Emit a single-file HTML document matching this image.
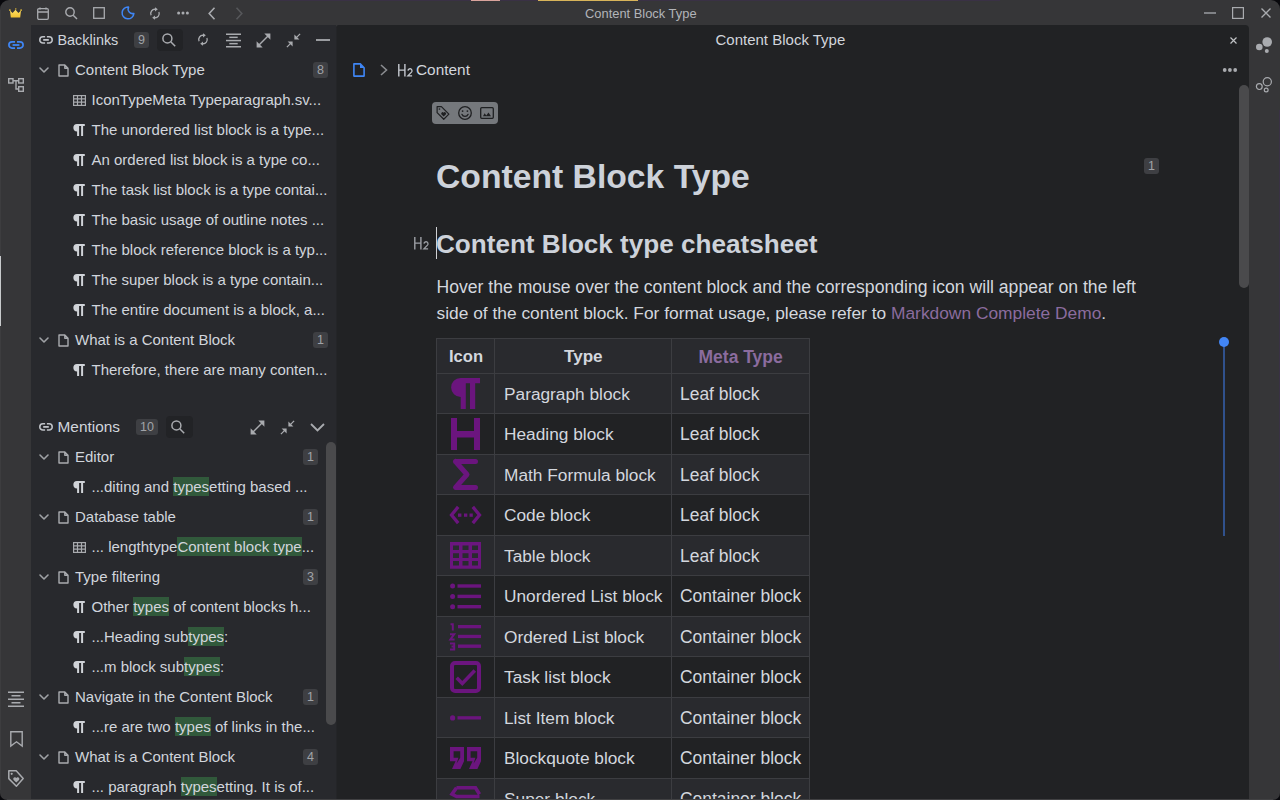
<!DOCTYPE html>
<html><head><meta charset="utf-8"><style>
*{box-sizing:border-box;margin:0;padding:0}
html,body{width:1280px;height:800px;overflow:hidden;background:#363638;font-family:"Liberation Sans",sans-serif}
.win{position:absolute;left:0;top:0;width:1280px;height:800px;background:#363638;border-radius:9px 9px 7px 7px;overflow:visible}
svg{position:absolute;display:block;overflow:visible}
.t{position:absolute;white-space:nowrap;color:#d1d5dc;font-size:15px;line-height:30px;height:30px}
.panel{position:absolute;left:31px;top:25px;width:305px;height:775px;background:#28292d;overflow:hidden}
.editor{position:absolute;left:336px;top:25px;width:913px;height:775px;background:#212224;border-top-left-radius:3px;border-top-right-radius:4px;border-left:1px solid #242528;overflow:hidden}
.badge{position:absolute;width:15px;height:16px;border-radius:3px;background:#3e3f43;color:#a0a3a8;font-size:12.5px;line-height:16px;text-align:center}
.hl{background:#31593b;padding:1px 0}
.g{fill:none;stroke:#a9abaf;stroke-width:1.5;stroke-linecap:round;stroke-linejoin:round}
.gf{fill:#a9abaf;stroke:none}
.p{fill:#6b157e;stroke:none}
.ps{fill:none;stroke:#6b157e}
</style></head><body>
<div style="position:absolute;left:0;top:0;width:12px;height:12px;background:#08080c"></div><div style="position:absolute;right:0;top:0;width:12px;height:12px;background:#08080c"></div><div style="position:absolute;left:0;bottom:0;width:12px;height:12px;background:#08080c"></div><div style="position:absolute;right:0;bottom:0;width:12px;height:12px;background:#08080c"></div>
<div class="win"></div>
<div style="position:absolute;left:260px;top:0;width:740px;height:1px;background:#3a3145"></div>
<div style="position:absolute;left:1279px;top:110px;width:1px;height:560px;background:#3a3145"></div>
<div style="position:absolute;left:471px;top:0;width:29px;height:1px;background:#d9a39c"></div>
<div style="position:absolute;left:538px;top:0;width:100px;height:1px;background:#d8b45a"></div>
<div style="position:absolute;left:0;top:10px;width:1px;height:780px;background:#3d3d3f"></div>
<div style="position:absolute;left:0;top:256px;width:1px;height:70px;background:#c8cacc"></div>
<svg style="left:8.5px;top:8.3px;width:13px;height:10px" viewBox="0 0 13 10" class=""><defs><linearGradient id="cg" x1="0" y1="0" x2="0" y2="1"><stop offset="0" stop-color="#ffe066"/><stop offset="1" stop-color="#f2c230"/></linearGradient></defs><path d="M1 2.6L3.6 5L6.5 1.7L9.4 5L12 2.6L11.2 9.6H1.8Z" fill="url(#cg)"/><circle cx="0.9" cy="2.1" r="0.85" fill="#eec53a"/><circle cx="12.1" cy="2.1" r="0.85" fill="#eec53a"/><path d="M6.2 0.2H7.4L7.2 1.8H6.4Z" fill="#eec53a"/></svg>
<svg style="left:37px;top:7px;width:12px;height:13px" viewBox="0 0 12 13" class=""><g fill="none" stroke="#a9abaf" stroke-width="1.3"><rect x="0.7" y="1.7" width="10.6" height="10.6" rx="1.2"/><path d="M0.7 5H11.3M3 0.5V2.5M9 0.5V2.5"/></g></svg>
<svg style="left:65px;top:7px;width:13px;height:13px" viewBox="0 0 13 13" class=""><g fill="none" stroke="#a9abaf" stroke-width="1.4"><circle cx="5" cy="5" r="4.2"/><path d="M8.2 8.2L12 12"/></g></svg>
<svg style="left:93px;top:7px;width:12px;height:12px" viewBox="0 0 12 12" class=""><rect x="0.7" y="0.7" width="10.6" height="10.6" fill="none" stroke="#a9abaf" stroke-width="1.3"/></svg>
<svg style="left:120.5px;top:6.3px;width:14px;height:14px" viewBox="0 0 14 14" class=""><path d="M7.6 1.1A5.9 5.9 0 1 0 12.9 7.4A4.5 4.5 0 0 1 7.6 1.1Z" fill="none" stroke="#3f86f5" stroke-width="1.5" stroke-linejoin="round"/></svg>
<svg style="left:150px;top:6.5px;width:10px;height:13px" viewBox="0 0 10 13" class=""><g fill="none" stroke="#a9abaf" stroke-width="1.3"><path d="M5.4 2.3A4.2 4.2 0 0 0 1.1 8.2"/><path d="M8.9 4.9A4.2 4.2 0 0 1 4.6 10.7"/></g><path d="M5 0.2L7.8 2.3L5 4.4Z" fill="#a9abaf"/><path d="M5 8.6L2.2 10.7L5 12.8Z" fill="#a9abaf"/></svg>
<svg style="left:177px;top:11px;width:12px;height:4px" viewBox="0 0 12 4" class=""><g fill="#a9abaf"><circle cx="1.6" cy="2" r="1.5"/><circle cx="6" cy="2" r="1.5"/><circle cx="10.4" cy="2" r="1.5"/></g></svg>
<svg style="left:208px;top:7px;width:8px;height:13px" viewBox="0 0 8 13" class=""><path d="M6.5 0.8L1.2 6.5L6.5 12.2" fill="none" stroke="#a9abaf" stroke-width="1.6"/></svg>
<svg style="left:235px;top:7px;width:8px;height:13px" viewBox="0 0 8 13" class=""><path d="M1.5 0.8L6.8 6.5L1.5 12.2" fill="none" stroke="#56575a" stroke-width="1.6"/></svg>
<div class="t" style="left:585px;top:5px;height:18px;line-height:18px;font-size:12.9px;color:#b2b4b8">Content Block Type</div>
<div style="position:absolute;left:1204px;top:12px;width:12px;height:2px;background:#808286"></div>
<svg style="left:1232px;top:7px;width:12px;height:12px" viewBox="0 0 12 12" class=""><rect x="0.6" y="0.6" width="10.8" height="10.8" fill="none" stroke="#a9abaf" stroke-width="1.2"/></svg>
<svg style="left:1261px;top:8px;width:10px;height:10px" viewBox="0 0 10 10" class=""><path d="M0.5 0.5L9.5 9.5M9.5 0.5L0.5 9.5" fill="none" stroke="#a9abaf" stroke-width="1.4"/></svg>
<svg style="left:8px;top:41px;width:16px;height:8px" viewBox="0 0 16 8" class=""><g fill="none" stroke="#3f86f5" stroke-width="1.7"><path d="M7 0.9H4A3.1 3.1 0 0 0 4 7.1H7"/><path d="M9 0.9H12A3.1 3.1 0 0 1 12 7.1H9"/><path d="M4.6 4H11.4" stroke-width="1.8"/></g></svg>
<svg style="left:8px;top:78px;width:16px;height:14px" viewBox="0 0 16 14" class=""><g fill="none" stroke="#a9abaf" stroke-width="1.4"><rect x="0.7" y="0.7" width="4.3" height="4.3"/><rect x="10.7" y="0.7" width="4.6" height="4.3"/><rect x="10.7" y="8.7" width="4.6" height="4.6"/><path d="M5 2.8H10.7M8 2.8V11H10.7"/></g></svg>
<svg style="left:8px;top:691px;width:16px;height:16px" viewBox="0 0 16 16" class=""><g fill="#a9abaf"><rect x="0" y="0.5" width="16" height="1.5"/><rect x="3.5" y="4.0" width="9.0" height="1.5"/><rect x="0" y="7.5" width="16" height="1.5"/><rect x="3.5" y="11.0" width="9.0" height="1.5"/><rect x="0" y="14.5" width="16" height="1.5"/></g></svg>
<svg style="left:10px;top:731px;width:13px;height:16px" viewBox="0 0 13 16" class=""><path d="M0.8 0.8H12.2V15L6.5 10.8L0.8 15Z" fill="none" stroke="#a9abaf" stroke-width="1.4" stroke-linejoin="miter"/></svg>
<svg style="left:8px;top:770px;width:16px;height:17px" viewBox="0 0 16 17" class=""><path d="M0.8 0.8H8.2L15.2 8.6L8.4 16.2L0.8 8.6Z" fill="none" stroke="#a9abaf" stroke-width="1.5" stroke-linejoin="round"/><circle cx="3.7" cy="3.8" r="1.1" fill="#a9abaf"/><path d="M8.3 12.6L5.6 10A1.6 1.6 0 0 1 8.3 7.9A1.6 1.6 0 0 1 11 10Z" fill="#a9abaf"/></svg>
<svg style="left:1255px;top:36px;width:18px;height:18px" viewBox="0 0 18 18" class=""><g fill="#a9abaf"><circle cx="12.2" cy="6" r="4.8"/><circle cx="4.3" cy="11" r="3.3"/><circle cx="11.8" cy="15" r="2"/></g></svg>
<svg style="left:1255px;top:76px;width:18px;height:18px" viewBox="0 0 18 18" class=""><g fill="none" stroke="#a9abaf" stroke-width="1.2"><circle cx="12.3" cy="5.7" r="4.1"/><circle cx="4.3" cy="10.6" r="2.9"/><circle cx="11.2" cy="14" r="1.9"/></g></svg>
<div class="panel"></div>
<svg style="left:39px;top:36.2px;width:14px;height:8px" viewBox="0 0 14 8" class=""><g fill="none" stroke="#bfc2c7" stroke-width="1.6"><path d="M6.1 0.8H3.9A3.1 3.1 0 0 0 3.9 7H6.1"/><path d="M7.9 0.8H10.1A3.1 3.1 0 0 1 10.1 7H7.9"/><path d="M4.2 3.9H9.8" stroke-width="1.8"/></g></svg>
<div class="t" style="left:57.5px;top:24.5px;font-size:14.4px;">Backlinks</div>
<div class="badge" style="left:134px;top:32px;width:15px">9</div>
<div style="position:absolute;left:157px;top:29px;width:26px;height:22px;border-radius:4px;background:#222326"></div>
<svg style="left:162px;top:33px;width:14px;height:14px" viewBox="0 0 14 14" class=""><g fill="none" stroke="#a9abaf" stroke-width="1.5"><circle cx="5.4" cy="5.4" r="4.5"/><path d="M8.7 8.7L13.2 13.2"/></g></svg>
<svg style="left:197.5px;top:33px;width:10px;height:13px" viewBox="0 0 10 13" class=""><g fill="none" stroke="#a9abaf" stroke-width="1.3"><path d="M5.4 2.3A4.2 4.2 0 0 0 1.1 8.2"/><path d="M8.9 4.9A4.2 4.2 0 0 1 4.6 10.7"/></g><path d="M5 0.2L7.8 2.3L5 4.4Z" fill="#a9abaf"/><path d="M5 8.6L2.2 10.7L5 12.8Z" fill="#a9abaf"/></svg>
<svg style="left:225.5px;top:33px;width:15px;height:14.5px" viewBox="0 0 15 14.5" class=""><g fill="#a9abaf"><rect x="0" y="0.5" width="15" height="1.5"/><rect x="3.3" y="3.6" width="8.4" height="1.5"/><rect x="0" y="6.8" width="15" height="1.5"/><rect x="3.3" y="9.9" width="8.4" height="1.5"/><rect x="0" y="13.0" width="15" height="1.5"/></g></svg>
<svg style="left:255.5px;top:32.5px;width:15px;height:15px" viewBox="0 0 15 15" class=""><path d="M2.5 12.5L12.5 2.5" stroke="#a9abaf" stroke-width="1.5"/><g fill="#a9abaf"><path d="M8.3 0.6H14.4V6.7Z"/><path d="M0.6 8.3V14.4H6.7Z"/></g></svg>
<svg style="left:285.5px;top:32.5px;width:15px;height:15px" viewBox="0 0 15 15" class=""><path d="M0.9 14.1L5.4 9.6M9.6 5.4L14.1 0.9" stroke="#a9abaf" stroke-width="1.3"/><g fill="#a9abaf"><path d="M8.4 1.6V6.6H13.4Z"/><path d="M1.6 8.4H6.6V13.4Z"/></g></svg>
<div style="position:absolute;left:316px;top:39.3px;width:14px;height:1.4px;background:#9a9ca0"></div>
<svg style="left:39px;top:67px;width:10px;height:6px" viewBox="0 0 10 6" class=""><path d="M1 1L5 5L9 1" fill="none" stroke="#9fa1a5" stroke-width="1.6" stroke-linecap="round" stroke-linejoin="round"/></svg>
<svg style="left:57.5px;top:64px;width:11px;height:13px" viewBox="0 0 11 13" class=""><path d="M1 1H6.8L10 4.2V12H1Z M6.8 1V4.2H10" fill="none" stroke="#a9abaf" stroke-width="1.4" stroke-linejoin="round"/></svg>
<div class="t" style="left:75px;top:54.5px;font-size:15px;">Content Block Type</div>
<div class="badge" style="left:313px;top:62px;width:15px">8</div>
<svg style="left:72.5px;top:94.5px;width:13px;height:11px" viewBox="0 0 13 11" class=""><g fill="none" stroke="#a9abaf" stroke-width="1.2"><rect x="0.6" y="0.6" width="11.8" height="9.8"/><path d="M0.6 3.9H12.4M0.6 7.2H12.4M4.5 0.6V10.4M8.5 0.6V10.4"/></g></svg>
<div class="t" style="left:91.5px;top:84.5px;font-size:15px;">IconTypeMeta Typeparagraph.sv...</div>
<svg style="left:73px;top:124px;width:12px;height:12px" viewBox="0 0 12 12" class=""><path d="M4 0H11.8V2.1H10.1V12H8.1V2.1H6.1V12H4.1V7.4A3.7 3.7 0 0 1 4 0Z" fill="#d0d3d8"/></svg>
<div class="t" style="left:91.5px;top:114.5px;font-size:15px;">The unordered list block is a type...</div>
<svg style="left:73px;top:154px;width:12px;height:12px" viewBox="0 0 12 12" class=""><path d="M4 0H11.8V2.1H10.1V12H8.1V2.1H6.1V12H4.1V7.4A3.7 3.7 0 0 1 4 0Z" fill="#d0d3d8"/></svg>
<div class="t" style="left:91.5px;top:144.5px;font-size:15px;">An ordered list block is a type co...</div>
<svg style="left:73px;top:184px;width:12px;height:12px" viewBox="0 0 12 12" class=""><path d="M4 0H11.8V2.1H10.1V12H8.1V2.1H6.1V12H4.1V7.4A3.7 3.7 0 0 1 4 0Z" fill="#d0d3d8"/></svg>
<div class="t" style="left:91.5px;top:174.5px;font-size:15px;">The task list block is a type contai...</div>
<svg style="left:73px;top:214px;width:12px;height:12px" viewBox="0 0 12 12" class=""><path d="M4 0H11.8V2.1H10.1V12H8.1V2.1H6.1V12H4.1V7.4A3.7 3.7 0 0 1 4 0Z" fill="#d0d3d8"/></svg>
<div class="t" style="left:91.5px;top:204.5px;font-size:15px;">The basic usage of outline notes ...</div>
<svg style="left:73px;top:244px;width:12px;height:12px" viewBox="0 0 12 12" class=""><path d="M4 0H11.8V2.1H10.1V12H8.1V2.1H6.1V12H4.1V7.4A3.7 3.7 0 0 1 4 0Z" fill="#d0d3d8"/></svg>
<div class="t" style="left:91.5px;top:234.5px;font-size:15px;">The block reference block is a typ...</div>
<svg style="left:73px;top:274px;width:12px;height:12px" viewBox="0 0 12 12" class=""><path d="M4 0H11.8V2.1H10.1V12H8.1V2.1H6.1V12H4.1V7.4A3.7 3.7 0 0 1 4 0Z" fill="#d0d3d8"/></svg>
<div class="t" style="left:91.5px;top:264.5px;font-size:15px;">The super block is a type contain...</div>
<svg style="left:73px;top:304px;width:12px;height:12px" viewBox="0 0 12 12" class=""><path d="M4 0H11.8V2.1H10.1V12H8.1V2.1H6.1V12H4.1V7.4A3.7 3.7 0 0 1 4 0Z" fill="#d0d3d8"/></svg>
<div class="t" style="left:91.5px;top:294.5px;font-size:15px;">The entire document is a block, a...</div>
<svg style="left:39px;top:337px;width:10px;height:6px" viewBox="0 0 10 6" class=""><path d="M1 1L5 5L9 1" fill="none" stroke="#9fa1a5" stroke-width="1.6" stroke-linecap="round" stroke-linejoin="round"/></svg>
<svg style="left:57.5px;top:334px;width:11px;height:13px" viewBox="0 0 11 13" class=""><path d="M1 1H6.8L10 4.2V12H1Z M6.8 1V4.2H10" fill="none" stroke="#a9abaf" stroke-width="1.4" stroke-linejoin="round"/></svg>
<div class="t" style="left:75px;top:324.5px;font-size:15px;">What is a Content Block</div>
<div class="badge" style="left:313px;top:332px;width:15px">1</div>
<svg style="left:73px;top:364px;width:12px;height:12px" viewBox="0 0 12 12" class=""><path d="M4 0H11.8V2.1H10.1V12H8.1V2.1H6.1V12H4.1V7.4A3.7 3.7 0 0 1 4 0Z" fill="#d0d3d8"/></svg>
<div class="t" style="left:91.5px;top:354.5px;font-size:15px;">Therefore, there are many conten...</div>
<svg style="left:39px;top:423.3px;width:14px;height:8px" viewBox="0 0 14 8" class=""><g fill="none" stroke="#bfc2c7" stroke-width="1.6"><path d="M6.1 0.8H3.9A3.1 3.1 0 0 0 3.9 7H6.1"/><path d="M7.9 0.8H10.1A3.1 3.1 0 0 1 10.1 7H7.9"/><path d="M4.2 3.9H9.8" stroke-width="1.8"/></g></svg>
<div class="t" style="left:57.5px;top:411.5px;font-size:15.4px;">Mentions</div>
<div class="badge" style="left:136px;top:419px;width:22px">10</div>
<div style="position:absolute;left:166px;top:416px;width:27px;height:22px;border-radius:4px;background:#222326"></div>
<svg style="left:171px;top:420px;width:14px;height:14px" viewBox="0 0 14 14" class=""><g fill="none" stroke="#a9abaf" stroke-width="1.5"><circle cx="5.4" cy="5.4" r="4.5"/><path d="M8.7 8.7L13.2 13.2"/></g></svg>
<svg style="left:249.5px;top:420px;width:15px;height:15px" viewBox="0 0 15 15" class=""><path d="M2.5 12.5L12.5 2.5" stroke="#a9abaf" stroke-width="1.5"/><g fill="#a9abaf"><path d="M8.3 0.6H14.4V6.7Z"/><path d="M0.6 8.3V14.4H6.7Z"/></g></svg>
<svg style="left:279.5px;top:420px;width:15px;height:15px" viewBox="0 0 15 15" class=""><path d="M0.9 14.1L5.4 9.6M9.6 5.4L14.1 0.9" stroke="#a9abaf" stroke-width="1.3"/><g fill="#a9abaf"><path d="M8.4 1.6V6.6H13.4Z"/><path d="M1.6 8.4H6.6V13.4Z"/></g></svg>
<svg style="left:310px;top:423px;width:15px;height:9px" viewBox="0 0 15 9" class=""><path d="M1 1L7.5 7.5L14 1" fill="none" stroke="#a9abaf" stroke-width="1.8"/></svg>
<div style="position:absolute;left:326px;top:442px;width:10px;height:283px;border-radius:5px;background:#4a4a4c"></div>
<svg style="left:39px;top:454px;width:10px;height:6px" viewBox="0 0 10 6" class=""><path d="M1 1L5 5L9 1" fill="none" stroke="#9fa1a5" stroke-width="1.6" stroke-linecap="round" stroke-linejoin="round"/></svg>
<svg style="left:57.5px;top:451px;width:11px;height:13px" viewBox="0 0 11 13" class=""><path d="M1 1H6.8L10 4.2V12H1Z M6.8 1V4.2H10" fill="none" stroke="#a9abaf" stroke-width="1.4" stroke-linejoin="round"/></svg>
<div class="t" style="left:75px;top:441.5px;font-size:15px;">Editor</div>
<div class="badge" style="left:303px;top:449px;width:15px">1</div>
<svg style="left:73px;top:481px;width:12px;height:12px" viewBox="0 0 12 12" class=""><path d="M4 0H11.8V2.1H10.1V12H8.1V2.1H6.1V12H4.1V7.4A3.7 3.7 0 0 1 4 0Z" fill="#d0d3d8"/></svg>
<div class="t" style="left:91.5px;top:471.5px;font-size:15px;">...diting and <span class="hl">types</span>etting based ...</div>
<svg style="left:39px;top:514px;width:10px;height:6px" viewBox="0 0 10 6" class=""><path d="M1 1L5 5L9 1" fill="none" stroke="#9fa1a5" stroke-width="1.6" stroke-linecap="round" stroke-linejoin="round"/></svg>
<svg style="left:57.5px;top:511px;width:11px;height:13px" viewBox="0 0 11 13" class=""><path d="M1 1H6.8L10 4.2V12H1Z M6.8 1V4.2H10" fill="none" stroke="#a9abaf" stroke-width="1.4" stroke-linejoin="round"/></svg>
<div class="t" style="left:75px;top:501.5px;font-size:15px;">Database table</div>
<div class="badge" style="left:303px;top:509px;width:15px">1</div>
<svg style="left:72.5px;top:541.5px;width:13px;height:11px" viewBox="0 0 13 11" class=""><g fill="none" stroke="#a9abaf" stroke-width="1.2"><rect x="0.6" y="0.6" width="11.8" height="9.8"/><path d="M0.6 3.9H12.4M0.6 7.2H12.4M4.5 0.6V10.4M8.5 0.6V10.4"/></g></svg>
<div class="t" style="left:91.5px;top:531.5px;font-size:15px;">... lengthtype<span class="hl">Content block type</span>...</div>
<svg style="left:39px;top:574px;width:10px;height:6px" viewBox="0 0 10 6" class=""><path d="M1 1L5 5L9 1" fill="none" stroke="#9fa1a5" stroke-width="1.6" stroke-linecap="round" stroke-linejoin="round"/></svg>
<svg style="left:57.5px;top:571px;width:11px;height:13px" viewBox="0 0 11 13" class=""><path d="M1 1H6.8L10 4.2V12H1Z M6.8 1V4.2H10" fill="none" stroke="#a9abaf" stroke-width="1.4" stroke-linejoin="round"/></svg>
<div class="t" style="left:75px;top:561.5px;font-size:15px;">Type filtering</div>
<div class="badge" style="left:303px;top:569px;width:15px">3</div>
<svg style="left:73px;top:601px;width:12px;height:12px" viewBox="0 0 12 12" class=""><path d="M4 0H11.8V2.1H10.1V12H8.1V2.1H6.1V12H4.1V7.4A3.7 3.7 0 0 1 4 0Z" fill="#d0d3d8"/></svg>
<div class="t" style="left:91.5px;top:591.5px;font-size:15px;">Other <span class="hl">types</span> of content blocks h...</div>
<svg style="left:73px;top:631px;width:12px;height:12px" viewBox="0 0 12 12" class=""><path d="M4 0H11.8V2.1H10.1V12H8.1V2.1H6.1V12H4.1V7.4A3.7 3.7 0 0 1 4 0Z" fill="#d0d3d8"/></svg>
<div class="t" style="left:91.5px;top:621.5px;font-size:15px;">...Heading sub<span class="hl">types</span>:</div>
<svg style="left:73px;top:661px;width:12px;height:12px" viewBox="0 0 12 12" class=""><path d="M4 0H11.8V2.1H10.1V12H8.1V2.1H6.1V12H4.1V7.4A3.7 3.7 0 0 1 4 0Z" fill="#d0d3d8"/></svg>
<div class="t" style="left:91.5px;top:651.5px;font-size:15px;">...m block sub<span class="hl">types</span>:</div>
<svg style="left:39px;top:694px;width:10px;height:6px" viewBox="0 0 10 6" class=""><path d="M1 1L5 5L9 1" fill="none" stroke="#9fa1a5" stroke-width="1.6" stroke-linecap="round" stroke-linejoin="round"/></svg>
<svg style="left:57.5px;top:691px;width:11px;height:13px" viewBox="0 0 11 13" class=""><path d="M1 1H6.8L10 4.2V12H1Z M6.8 1V4.2H10" fill="none" stroke="#a9abaf" stroke-width="1.4" stroke-linejoin="round"/></svg>
<div class="t" style="left:75px;top:681.5px;font-size:15px;">Navigate in the Content Block</div>
<div class="badge" style="left:303px;top:689px;width:15px">1</div>
<svg style="left:73px;top:721px;width:12px;height:12px" viewBox="0 0 12 12" class=""><path d="M4 0H11.8V2.1H10.1V12H8.1V2.1H6.1V12H4.1V7.4A3.7 3.7 0 0 1 4 0Z" fill="#d0d3d8"/></svg>
<div class="t" style="left:91.5px;top:711.5px;font-size:15px;">...re are two <span class="hl">types</span> of links in the...</div>
<svg style="left:39px;top:754px;width:10px;height:6px" viewBox="0 0 10 6" class=""><path d="M1 1L5 5L9 1" fill="none" stroke="#9fa1a5" stroke-width="1.6" stroke-linecap="round" stroke-linejoin="round"/></svg>
<svg style="left:57.5px;top:751px;width:11px;height:13px" viewBox="0 0 11 13" class=""><path d="M1 1H6.8L10 4.2V12H1Z M6.8 1V4.2H10" fill="none" stroke="#a9abaf" stroke-width="1.4" stroke-linejoin="round"/></svg>
<div class="t" style="left:75px;top:741.5px;font-size:15px;">What is a Content Block</div>
<div class="badge" style="left:303px;top:749px;width:15px">4</div>
<svg style="left:73px;top:781px;width:12px;height:12px" viewBox="0 0 12 12" class=""><path d="M4 0H11.8V2.1H10.1V12H8.1V2.1H6.1V12H4.1V7.4A3.7 3.7 0 0 1 4 0Z" fill="#d0d3d8"/></svg>
<div class="t" style="left:91.5px;top:771.5px;font-size:15px;">... paragraph <span class="hl">types</span>etting. It is of...</div>
<div class="editor"></div>
<div class="t" style="left:715.5px;top:24.5px;font-size:15px;">Content Block Type</div>
<svg style="left:1229.5px;top:36.5px;width:7px;height:7px" viewBox="0 0 7 7" class=""><path d="M0.5 0.5L6.5 6.5M6.5 0.5L0.5 6.5" fill="none" stroke="#c0c2c5" stroke-width="1.2"/></svg>
<svg style="left:353px;top:63px;width:12px;height:14px" viewBox="0 0 12 14" class=""><path d="M0.9 0.9H7.3L11.1 4.7V13.1H0.9Z" fill="none" stroke="#3f86f5" stroke-width="1.6" stroke-linejoin="round"/><path d="M7 0.9V4.9H11.1Z" fill="#3f86f5"/></svg>
<svg style="left:380px;top:64px;width:8px;height:12px" viewBox="0 0 8 12" class=""><path d="M1 1L6.5 6L1 11" fill="none" stroke="#8a8c90" stroke-width="1.6"/></svg>
<svg style="left:397.5px;top:63.7px;width:15px;height:13px" viewBox="0 0 15 13" class=""><g fill="none" stroke="#c5c9d0" stroke-width="1.4"><path d="M0.8 0V12.4M6.9 0V12.4M0.8 6.1H6.9"/><path d="M10 6.6A2 2 0 1 1 13.5 8.1L9.9 11.8H14.1" stroke-width="1.3"/></g></svg>
<div class="t" style="left:416px;top:54.5px;font-size:15.4px;">Content</div>
<svg style="left:1222px;top:68px;width:15px;height:4px" viewBox="0 0 15 4" class=""><g fill="#a9abaf"><circle cx="2.7" cy="2" r="1.9"/><circle cx="7.9" cy="2" r="1.9"/><circle cx="13.2" cy="2" r="1.9"/></g></svg>
<div style="position:absolute;left:1239px;top:85px;width:10px;height:203px;border-radius:5px;background:#4a4a4c"></div>
<div style="position:absolute;left:432px;top:102px;width:66px;height:22px;border-radius:4px;background:#75787c"></div>
<svg style="left:436px;top:106px;width:14px;height:14px" viewBox="0 0 14 15" class=""><g fill="none" stroke="#1f2022" stroke-width="1.3" stroke-linejoin="round"><path d="M0.7 0.7H5.3L13.3 8.7L7.8 14.2L0.7 7.1Z"/></g><circle cx="3.2" cy="3.2" r="0.9" fill="#1f2022"/><path d="M7.7 11.3L5.4 9A1.4 1.4 0 0 1 7.7 7.2A1.4 1.4 0 0 1 10 9Z" fill="#1f2022"/></svg>
<svg style="left:458px;top:106px;width:14px;height:14px" viewBox="0 0 14 14" class=""><g fill="none" stroke="#1f2022" stroke-width="1.3"><circle cx="7" cy="7" r="6.3"/><path d="M3.9 8.3A3.3 3.3 0 0 0 10.1 8.3" stroke-linecap="round"/></g><circle cx="4.6" cy="5.1" r="0.9" fill="#1f2022"/><circle cx="9.4" cy="5.1" r="0.9" fill="#1f2022"/></svg>
<svg style="left:480px;top:107px;width:14px;height:12px" viewBox="0 0 14 12" class=""><rect x="0.7" y="0.7" width="12.6" height="10.6" rx="1" fill="none" stroke="#1f2022" stroke-width="1.3"/><path d="M3 9.2L4.6 6.3L6.3 8.4L8.5 5.6L11 9.2Z" fill="#1f2022"/></svg>
<div class="t" style="left:436px;top:152px;height:48px;line-height:48px;font-size:33.7px;font-weight:bold;color:#cdd2da">Content Block Type</div>
<div class="badge" style="left:1144px;top:158px;width:15px">1</div>
<svg style="left:413.5px;top:236.6px;width:15px;height:13px" viewBox="0 0 15 13" class=""><g fill="none" stroke="#9da0a6" stroke-width="1.4"><path d="M0.8 0V12.4M6.9 0V12.4M0.8 6.1H6.9"/><path d="M10 6.6A2 2 0 1 1 13.5 8.1L9.9 11.8H14.1" stroke-width="1.3"/></g></svg>
<div style="position:absolute;left:436px;top:227px;width:1px;height:32px;background:#cfd1d4"></div>
<div class="t" style="left:436px;top:226px;height:36px;line-height:36px;font-size:26.1px;font-weight:bold;color:#cdd2da">Content Block type cheatsheet</div>
<div class="t" style="left:436.5px;top:274px;height:26px;line-height:26px;font-size:17.6px;color:#d3d7de">Hover the mouse over the content block and the corresponding icon will appear on the left</div>
<div class="t" style="left:436.5px;top:300px;height:26px;line-height:26px;font-size:17.38px;color:#d3d7de">side of the content block. For format usage, please refer to <span style="color:#8b6c9e">Markdown Complete Demo</span>.</div>
<div style="position:absolute;left:1223px;top:342px;width:2px;height:194px;background:#30518c"></div>
<div style="position:absolute;left:1218.5px;top:336.5px;width:10.5px;height:10.5px;border-radius:50%;background:#4285f4"></div>
<div style="position:absolute;left:436px;top:338px;width:374px;height:35px;background:#292a2e"></div>
<div style="position:absolute;left:436px;top:373px;width:374px;height:40px;background:#292a2e"></div>
<div style="position:absolute;left:436px;top:454px;width:374px;height:40px;background:#292a2e"></div>
<div style="position:absolute;left:436px;top:535px;width:374px;height:40px;background:#292a2e"></div>
<div style="position:absolute;left:436px;top:616px;width:374px;height:40px;background:#292a2e"></div>
<div style="position:absolute;left:436px;top:697px;width:374px;height:40px;background:#292a2e"></div>
<div style="position:absolute;left:436px;top:778px;width:374px;height:41px;background:#292a2e"></div>
<div style="position:absolute;left:436px;top:338px;width:374px;height:1px;background:#3c3d41"></div>
<div style="position:absolute;left:436px;top:373px;width:374px;height:1px;background:#3c3d41"></div>
<div style="position:absolute;left:436px;top:413px;width:374px;height:1px;background:#3c3d41"></div>
<div style="position:absolute;left:436px;top:454px;width:374px;height:1px;background:#3c3d41"></div>
<div style="position:absolute;left:436px;top:494px;width:374px;height:1px;background:#3c3d41"></div>
<div style="position:absolute;left:436px;top:535px;width:374px;height:1px;background:#3c3d41"></div>
<div style="position:absolute;left:436px;top:575px;width:374px;height:1px;background:#3c3d41"></div>
<div style="position:absolute;left:436px;top:616px;width:374px;height:1px;background:#3c3d41"></div>
<div style="position:absolute;left:436px;top:656px;width:374px;height:1px;background:#3c3d41"></div>
<div style="position:absolute;left:436px;top:697px;width:374px;height:1px;background:#3c3d41"></div>
<div style="position:absolute;left:436px;top:737px;width:374px;height:1px;background:#3c3d41"></div>
<div style="position:absolute;left:436px;top:778px;width:374px;height:1px;background:#3c3d41"></div>
<div style="position:absolute;left:436px;top:338px;width:1px;height:470px;background:#3c3d41"></div>
<div style="position:absolute;left:494px;top:338px;width:1px;height:470px;background:#3c3d41"></div>
<div style="position:absolute;left:671px;top:338px;width:1px;height:470px;background:#3c3d41"></div>
<div style="position:absolute;left:809px;top:338px;width:1px;height:470px;background:#3c3d41"></div>
<div class="t" style="left:449px;top:341.6px;height:30px;line-height:30px;font-size:16.6px;font-weight:bold;color:#d3d7de">Icon</div>
<div class="t" style="left:564px;top:341.6px;height:30px;line-height:30px;font-size:17.1px;font-weight:bold;color:#d3d7de">Type</div>
<div class="t" style="left:698.5px;top:341.6px;height:30px;line-height:30px;font-size:17.5px;font-weight:bold;color:#8b6c9e">Meta Type</div>
<svg style="left:451px;top:378px;width:29px;height:31px" viewBox="0 0 29 31" class=""><path d="M9.5 0H29V5.2H24.2V31H19V5.2H14.8V31H9.7V19A9.5 9.5 0 0 1 9.5 0Z" fill="#6b157e"/></svg>
<svg style="left:451px;top:418px;width:29px;height:32px" viewBox="0 0 29 32" class=""><path d="M0 0H6V13H23V0H29V32H23V19.5H6V32H0Z" fill="#6b157e"/></svg>
<svg style="left:453px;top:459px;width:25px;height:31px" viewBox="0 0 25 31" class=""><path d="M2.5 2.5H22.5M2.5 2.5L14 15.5L2.5 28.5H22.5" fill="none" stroke="#6b157e" stroke-width="5" stroke-linecap="round" stroke-linejoin="round"/></svg>
<svg style="left:450px;top:506px;width:31px;height:18px" viewBox="0 0 31 18" class=""><path d="M8.2 0.9L1.5 9L8.2 17.1M22.8 0.9L29.5 9L22.8 17.1" fill="none" stroke="#6b157e" stroke-width="3.3"/><rect x="8" y="7.5" width="3.4" height="3.3" fill="#6b157e"/><rect x="14" y="7.5" width="3.3" height="3.3" fill="#6b157e"/><rect x="19.5" y="7.5" width="3.3" height="3.3" fill="#6b157e"/></svg>
<svg style="left:450px;top:542px;width:31px;height:27px" viewBox="0 0 31 27" class=""><path fill-rule="evenodd" d="M0 0H31V26.8H0Z M3 3.5V8H9V3.5Z M12.5 3.5V8H18.5V3.5Z M22 3.5V8H28V3.5Z M3 11.3V16H9V11.3Z M12.5 11.3V16H18.5V11.3Z M22 11.3V16H28V11.3Z M3 19V23.5H9V19Z M12.5 19V23.5H18.5V19Z M22 19V23.5H28V19Z" fill="#6b157e"/></svg>
<svg style="left:450px;top:582.5px;width:32px;height:26px" viewBox="0 0 32 26" class=""><g fill="#6b157e"><circle cx="2.6" cy="3" r="2.5"/><circle cx="2.6" cy="13.4" r="2.5"/><circle cx="2.6" cy="23.7" r="2.5"/><rect x="7.5" y="1.3" width="23.5" height="3.4"/><rect x="7.5" y="11.7" width="23.5" height="3.4"/><rect x="7.5" y="22" width="23.5" height="3.4"/></g></svg>
<svg style="left:450px;top:622.5px;width:32px;height:28px" viewBox="0 0 32 28" class=""><g fill="#6b157e"><rect x="8" y="2" width="23" height="3.3"/><rect x="8" y="11.8" width="23" height="3.3"/><rect x="8" y="21.5" width="23" height="3.4"/></g><g fill="none" stroke="#6b157e" stroke-width="2"><path d="M0.5 1.2H2.8V7.5"/><path d="M0 11.2H4.2L0.4 16.4H4.6"/><path d="M0 20.5H4.2V26.5H0M1.5 23.5H4.2"/></g></svg>
<svg style="left:450px;top:661px;width:31px;height:32px" viewBox="0 0 31 32" class=""><rect x="2" y="2" width="27" height="28" rx="3" fill="none" stroke="#6b157e" stroke-width="4"/><path d="M6.7 16.8L12.3 22.4L24.8 9.6" fill="none" stroke="#6b157e" stroke-width="3.6"/></svg>
<svg style="left:450px;top:714.5px;width:32px;height:6px" viewBox="0 0 32 6" class=""><g fill="#6b157e"><circle cx="2.6" cy="2.9" r="2.6"/><rect x="7.5" y="1.2" width="23.5" height="3.3"/></g></svg>
<svg style="left:450px;top:747px;width:32px;height:22px" viewBox="0 0 32 22" class=""><path fill-rule="evenodd" d="M0 0H14V14.3L10.4 22H2L5.5 14.3H0Z M3.6 4.2V10.7H8.4L6.6 16.6L10.2 10.7V4.2Z M17 0H31V14.3L27.4 22H19L22.5 14.3H17Z M20.6 4.2V10.7H25.4L23.6 16.6L27.2 10.7V4.2Z" fill="#6b157e"/></svg>
<svg style="left:449.5px;top:786px;width:32px;height:16px" viewBox="0 0 32 16" class=""><path d="M6.5 1.8H25.5L29.5 8.2M29.5 10.5H6.5L2 8.2L6.5 1.8" fill="none" stroke="#6b157e" stroke-width="3.6" stroke-linejoin="miter"/></svg>
<div class="t" style="left:504px;top:378.5px;font-size:17.3px;color:#d3d7de">Paragraph block</div>
<div class="t" style="left:680px;top:378.5px;font-size:17.45px;color:#d3d7de">Leaf block</div>
<div class="t" style="left:504px;top:419.0px;font-size:17.3px;color:#d3d7de">Heading block</div>
<div class="t" style="left:680px;top:419.0px;font-size:17.45px;color:#d3d7de">Leaf block</div>
<div class="t" style="left:504px;top:459.5px;font-size:17.3px;color:#d3d7de">Math Formula block</div>
<div class="t" style="left:680px;top:459.5px;font-size:17.45px;color:#d3d7de">Leaf block</div>
<div class="t" style="left:504px;top:500.0px;font-size:17.3px;color:#d3d7de">Code block</div>
<div class="t" style="left:680px;top:500.0px;font-size:17.45px;color:#d3d7de">Leaf block</div>
<div class="t" style="left:504px;top:540.5px;font-size:17.3px;color:#d3d7de">Table block</div>
<div class="t" style="left:680px;top:540.5px;font-size:17.45px;color:#d3d7de">Leaf block</div>
<div class="t" style="left:504px;top:581.0px;font-size:17.3px;color:#d3d7de">Unordered List block</div>
<div class="t" style="left:680px;top:581.0px;font-size:17.45px;color:#d3d7de">Container block</div>
<div class="t" style="left:504px;top:621.5px;font-size:17.3px;color:#d3d7de">Ordered List block</div>
<div class="t" style="left:680px;top:621.5px;font-size:17.45px;color:#d3d7de">Container block</div>
<div class="t" style="left:504px;top:662.0px;font-size:17.3px;color:#d3d7de">Task list block</div>
<div class="t" style="left:680px;top:662.0px;font-size:17.45px;color:#d3d7de">Container block</div>
<div class="t" style="left:504px;top:702.5px;font-size:17.3px;color:#d3d7de">List Item block</div>
<div class="t" style="left:680px;top:702.5px;font-size:17.45px;color:#d3d7de">Container block</div>
<div class="t" style="left:504px;top:743.0px;font-size:17.3px;color:#d3d7de">Blockquote block</div>
<div class="t" style="left:680px;top:743.0px;font-size:17.45px;color:#d3d7de">Container block</div>
<div class="t" style="left:504px;top:784.0px;font-size:17.3px;color:#d3d7de">Super block</div>
<div class="t" style="left:680px;top:784.0px;font-size:17.45px;color:#d3d7de">Container block</div>
<div style="position:absolute;left:7px;top:799px;width:1266px;height:1px;background:#414143"></div>
</body></html>
